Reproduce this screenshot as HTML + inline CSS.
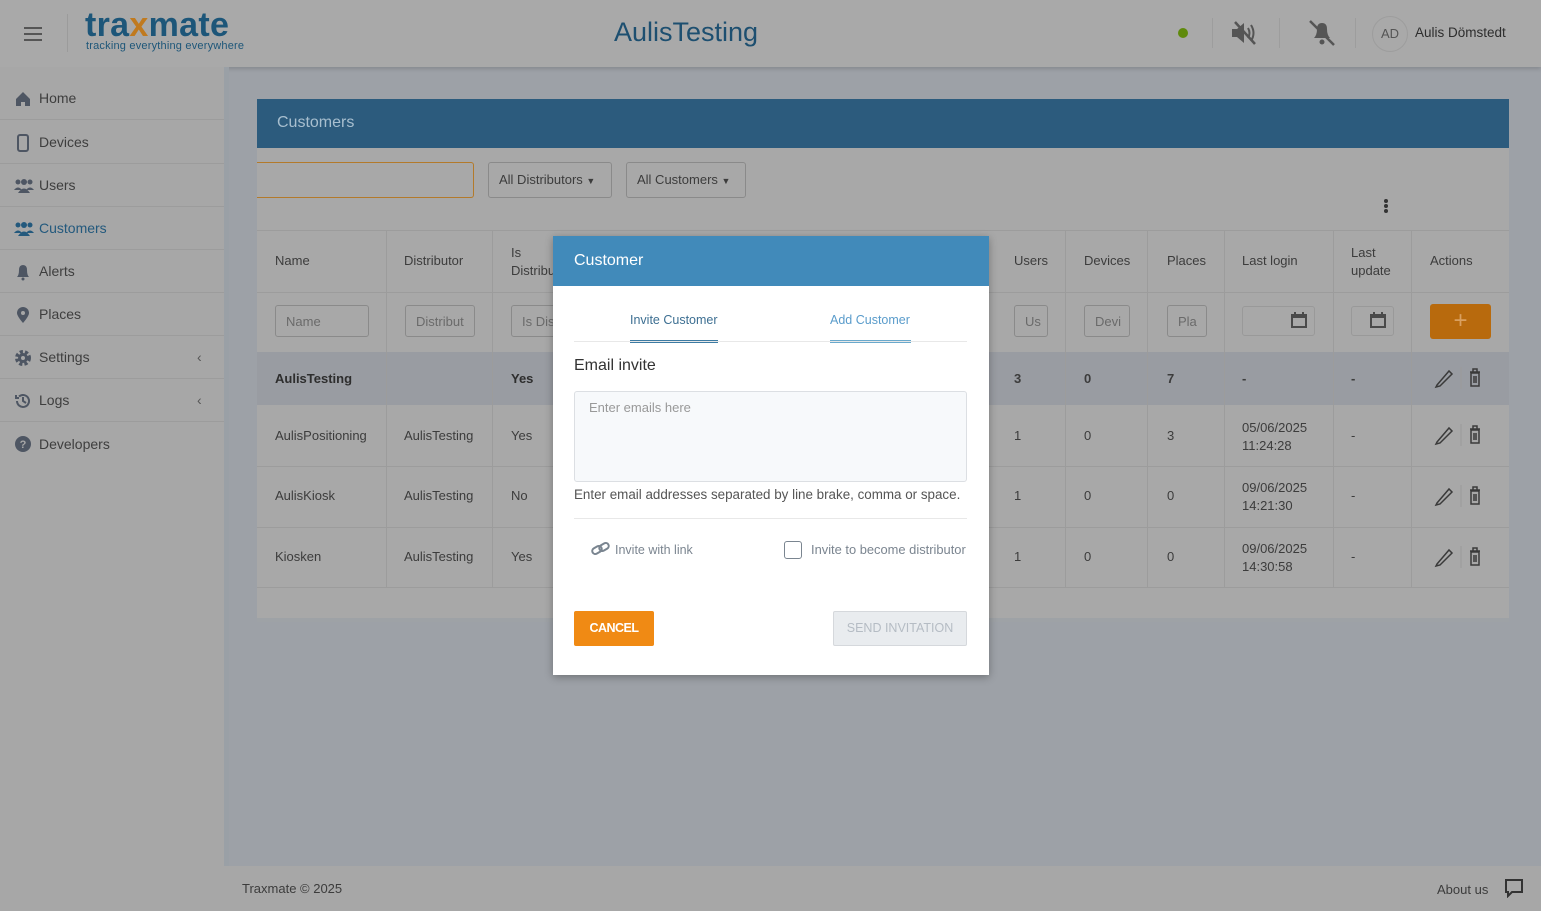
<!DOCTYPE html>
<html><head><meta charset="utf-8">
<style>
*{box-sizing:border-box;margin:0;padding:0}
body{width:1541px;height:911px;overflow:hidden;background:#9da1a7;font-family:"Liberation Sans",sans-serif;color:#3c3c3c;position:relative;font-size:13px}
.a{position:absolute}
.hdr{left:0;top:0;width:1541px;height:67px;background:#a9a9a9;box-shadow:0 2px 4px rgba(0,0,0,.15)}
.side{left:0;top:67px;width:224px;height:844px;background:#a7a7a7}
.nav{position:absolute;left:0;width:224px;height:43px;border-bottom:1px solid #9c9c9c;font-size:14px;color:#3e3e3e;display:flex;align-items:center;padding-left:39px}
.ico{position:absolute;left:14px;top:13px;width:18px;height:18px}
.card{left:257px;top:99px;width:1252px;height:522px;background:#a8a8a8}
.cell{position:absolute;font-size:13px;color:#3c3c3c}
.vl{position:absolute;width:1px;background:#9c9c9c}
.hl{position:absolute;height:1px;background:#9c9c9c;left:257px;width:1252px}
.inp{position:absolute;height:32px;border:1px solid #8a8a8a;border-radius:3px;font-size:13px;color:#6a6a6a;padding:8px 10px;white-space:nowrap;overflow:hidden}
.modal{left:553px;top:236px;width:436px;height:439px;background:#fff;box-shadow:0 2px 8px rgba(0,0,0,.3)}
</style></head><body>
<div class="a hdr">
  <div class="a" style="left:24px;top:27px;width:18px;height:2px;background:#555;box-shadow:0 6px 0 #555,0 12px 0 #555"></div>
  <div class="a" style="left:67px;top:14px;width:1px;height:38px;background:#9b9b9b"></div>
  <div class="a" style="left:85px;top:6px;font-size:34px;font-weight:bold;color:#1d5679;letter-spacing:0.3px">tra<span style="color:#c07a1f">x</span>mate</div>
  <div class="a" style="left:86px;top:40px;font-size:11px;color:#1d5679;letter-spacing:0.2px">tracking everything everywhere</div>
  <div class="a" style="left:614px;top:17px;font-size:27px;color:#1d4f70">AulisTesting</div>
  <div class="a" style="left:1178px;top:28px;width:10px;height:10px;border-radius:50%;background:#5f8a0c"></div>
  <div class="a" style="left:1212px;top:18px;width:1px;height:30px;background:#9d9d9d"></div>
  <svg class="a" style="left:1230px;top:20px" width="30" height="26" viewBox="0 0 30 26"><path d="M2 9h5l7-6v20l-7-6H2z" fill="#555"/><path d="M18 8q3 5 0 10M21 5q5 8 0 16" stroke="#555" stroke-width="2" fill="none"/><path d="M5 2l20 22" stroke="#555" stroke-width="2.5"/></svg>
  <div class="a" style="left:1279px;top:18px;width:1px;height:30px;background:#9d9d9d"></div>
  <svg class="a" style="left:1306px;top:18px" width="32" height="30" viewBox="0 0 32 30"><path d="M8 20q3-3 3-9q0-6 5-6q5 0 5 6q0 6 3 9z" fill="#555"/><circle cx="16" cy="24" r="2.5" fill="#555"/><path d="M4 3l24 24" stroke="#555" stroke-width="2.5"/></svg>
  <div class="a" style="left:1355px;top:18px;width:1px;height:30px;background:#9d9d9d"></div>
  <div class="a" style="left:1372px;top:16px;width:36px;height:36px;border-radius:50%;border:1px solid #9d9d9d;font-size:13px;color:#555;text-align:center;line-height:34px">AD</div>
  <div class="a" style="left:1415px;top:25px;font-size:13.5px;color:#2d2d2d">Aulis Dömstedt</div>
</div>
<div class="a side">
  <div class="nav" style="top:10px"><svg class="ico" viewBox="0 0 18 18"><path d="M2 9L9 2l7 7v7h-5v-4H7v4H2z" fill="#4e5663"/></svg>Home</div>
  <div class="nav" style="top:54px"><svg class="ico" viewBox="0 0 18 18"><rect x="4" y="1" width="10" height="16" rx="2" fill="none" stroke="#4e5663" stroke-width="2"/></svg>Devices</div>
  <div class="nav" style="top:97px"><svg class="ico" viewBox="0 0 22 18" style="width:22px;left:13px"><circle cx="5" cy="5" r="2.5" fill="#4e5663"/><circle cx="11" cy="5" r="3" fill="#4e5663"/><circle cx="17" cy="5" r="2.5" fill="#4e5663"/><path d="M1 13q4-5 8 0zM5 16q6-9 12 0zM13 13q4-5 8 0z" fill="#4e5663"/></svg>Users</div>
  <div class="nav" style="top:140px;color:#23597d"><svg class="ico" viewBox="0 0 22 18" style="width:22px;left:13px"><circle cx="5" cy="5" r="2.5" fill="#23597d"/><circle cx="11" cy="5" r="3" fill="#23597d"/><circle cx="17" cy="5" r="2.5" fill="#23597d"/><path d="M1 13q4-5 8 0zM5 16q6-9 12 0zM13 13q4-5 8 0z" fill="#23597d"/></svg>Customers</div>
  <div class="nav" style="top:183px"><svg class="ico" viewBox="0 0 18 18"><path d="M3 14q2-2 2-7q0-5 4-5q4 0 4 5q0 5 2 7z" fill="#4e5663"/><circle cx="9" cy="16" r="1.5" fill="#4e5663"/></svg>Alerts</div>
  <div class="nav" style="top:226px"><svg class="ico" viewBox="0 0 18 18"><path d="M9 17Q3 10 3 7a6 6 0 0 1 12 0q0 3-6 10z" fill="#4e5663"/><circle cx="9" cy="7" r="2" fill="#a7a7a7"/></svg>Places</div>
  <div class="nav" style="top:269px"><svg class="ico" viewBox="0 0 18 18"><circle cx="9" cy="9" r="6" fill="none" stroke="#4e5663" stroke-width="4" stroke-dasharray="3 2"/><circle cx="9" cy="9" r="5" fill="#4e5663"/><circle cx="9" cy="9" r="2" fill="#a7a7a7"/></svg>Settings<span class="a" style="left:197px;color:#555">‹</span></div>
  <div class="nav" style="top:312px"><svg class="ico" viewBox="0 0 18 18"><path d="M3 9a6 6 0 1 0 2-4.5M2 3v3h3M9 5v4l3 2" fill="none" stroke="#4e5663" stroke-width="2"/></svg>Logs<span class="a" style="left:197px;color:#555">‹</span></div>
  <div class="nav" style="top:355px;border:none"><svg class="ico" viewBox="0 0 18 18"><circle cx="9" cy="9" r="8" fill="#4e5663"/><text x="9" y="13" font-size="11" text-anchor="middle" fill="#a7a7a7" font-weight="bold" font-family="Liberation Sans">?</text></svg>Developers</div>
</div>
<div class="a" style="left:224px;top:67px;width:5px;height:844px;background:#9aa0a6"></div>
<div class="a card"></div>
<div class="a" style="left:257px;top:99px;width:1252px;height:49px;background:#2c5b7d;color:#a8bfcf;font-size:16px;padding:15px 20px">Customers</div>
<div class="a" style="left:257px;top:162px;width:217px;height:36px;border:1px solid #b37a2b;border-left:none;border-radius:0 3px 3px 0"></div>
<div class="inp" style="left:488px;top:162px;width:124px;height:36px;padding:9px 10px;color:#3c3c3c">All Distributors <span style="font-size:9px">▼</span></div>
<div class="inp" style="left:626px;top:162px;width:120px;height:36px;padding:9px 10px;color:#3c3c3c">All Customers <span style="font-size:9px">▼</span></div>
<div class="a" style="left:1384px;top:199px;width:4px;height:4px;border-radius:50%;background:#333;box-shadow:0 5px 0 #333,0 10px 0 #333"></div>
<div class="hl" style="top:230px"></div>
<div class="hl" style="top:292px"></div>
<div class="a" style="left:257px;top:352px;width:1252px;height:53px;background:#999ca2"></div>
<div class="hl" style="top:466px"></div>
<div class="hl" style="top:527px"></div>
<div class="hl" style="top:587px"></div>
<div class="a" style="left:257px;top:618px;width:1252px;height:4px;background:#9ea2a6"></div>
<div class="vl" style="left:386px;top:231px;height:356px"></div>
<div class="vl" style="left:492px;top:231px;height:356px"></div>
<div class="vl" style="left:1065px;top:231px;height:356px"></div>
<div class="vl" style="left:1147px;top:231px;height:356px"></div>
<div class="vl" style="left:1224px;top:231px;height:356px"></div>
<div class="vl" style="left:1333px;top:231px;height:356px"></div>
<div class="vl" style="left:1411px;top:231px;height:356px"></div>
<div class="cell" style="left:275px;top:253px">Name</div>
<div class="cell" style="left:404px;top:253px">Distributor</div>
<div class="cell" style="left:511px;top:244px;line-height:18px">Is<br>Distribu</div>
<div class="cell" style="left:1014px;top:253px">Users</div>
<div class="cell" style="left:1084px;top:253px">Devices</div>
<div class="cell" style="left:1167px;top:253px">Places</div>
<div class="cell" style="left:1242px;top:253px">Last login</div>
<div class="cell" style="left:1351px;top:244px;line-height:18px">Last<br>update</div>
<div class="cell" style="left:1430px;top:253px">Actions</div>
<div class="inp" style="left:275px;top:305px;width:94px">Name</div>
<div class="inp" style="left:405px;top:305px;width:70px">Distribut</div>
<div class="inp" style="left:511px;top:305px;width:50px">Is Dis</div>
<div class="inp" style="left:1014px;top:305px;width:34px">Us</div>
<div class="inp" style="left:1084px;top:305px;width:46px">Devi</div>
<div class="inp" style="left:1167px;top:305px;width:40px">Pla</div>
<div class="inp" style="left:1242px;top:306px;width:73px;height:30px;border-color:#999"></div>
<div class="inp" style="left:1351px;top:306px;width:43px;height:30px;border-color:#999"></div>
<svg class="a" style="left:1290px;top:311px" width="18" height="18" viewBox="0 0 18 18"><rect x="2" y="4" width="14" height="12" fill="none" stroke="#4a4a4a" stroke-width="2"/><rect x="2" y="4" width="14" height="3" fill="#4a4a4a"/><path d="M5 1v4M13 1v4" stroke="#4a4a4a" stroke-width="2"/></svg>
<svg class="a" style="left:1369px;top:311px" width="18" height="18" viewBox="0 0 18 18"><rect x="2" y="4" width="14" height="12" fill="none" stroke="#4a4a4a" stroke-width="2"/><rect x="2" y="4" width="14" height="3" fill="#4a4a4a"/><path d="M5 1v4M13 1v4" stroke="#4a4a4a" stroke-width="2"/></svg>
<div class="a" style="left:1430px;top:304px;width:61px;height:35px;background:#b86a0d;border-radius:3px;color:#d9a060;font-size:24px;text-align:center;line-height:33px;font-weight:300">+</div>
<div class="cell" style="left:275px;top:371px;font-weight:bold;color:#2e2e2e">AulisTesting</div>
<div class="cell" style="left:511px;top:371px;font-weight:bold;color:#2e2e2e">Yes</div>
<div class="cell" style="left:1014px;top:371px;font-weight:bold">3</div>
<div class="cell" style="left:1084px;top:371px;font-weight:bold">0</div>
<div class="cell" style="left:1167px;top:371px;font-weight:bold">7</div>
<div class="cell" style="left:1242px;top:371px;font-weight:bold">-</div>
<div class="cell" style="left:1351px;top:371px;font-weight:bold">-</div>
<div class="cell" style="left:275px;top:428px">AulisPositioning</div><div class="cell" style="left:404px;top:428px">AulisTesting</div><div class="cell" style="left:511px;top:428px">Yes</div><div class="cell" style="left:1014px;top:428px">1</div><div class="cell" style="left:1084px;top:428px">0</div><div class="cell" style="left:1167px;top:428px">3</div><div class="cell" style="left:1242px;top:419px;line-height:18px">05/06/2025<br>11:24:28</div><div class="cell" style="left:1351px;top:428px">-</div>
<div class="cell" style="left:275px;top:488px">AulisKiosk</div><div class="cell" style="left:404px;top:488px">AulisTesting</div><div class="cell" style="left:511px;top:488px">No</div><div class="cell" style="left:1014px;top:488px">1</div><div class="cell" style="left:1084px;top:488px">0</div><div class="cell" style="left:1167px;top:488px">0</div><div class="cell" style="left:1242px;top:479px;line-height:18px">09/06/2025<br>14:21:30</div><div class="cell" style="left:1351px;top:488px">-</div>
<div class="cell" style="left:275px;top:549px">Kiosken</div><div class="cell" style="left:404px;top:549px">AulisTesting</div><div class="cell" style="left:511px;top:549px">Yes</div><div class="cell" style="left:1014px;top:549px">1</div><div class="cell" style="left:1084px;top:549px">0</div><div class="cell" style="left:1167px;top:549px">0</div><div class="cell" style="left:1242px;top:540px;line-height:18px">09/06/2025<br>14:30:58</div><div class="cell" style="left:1351px;top:549px">-</div>
<svg class="a" style="left:1434px;top:367px" width="54" height="220" viewBox="0 0 54 220">
<g id="r" fill="none" stroke="#3a3a3a" stroke-width="1.5"><path d="M3 18L15 4l3 3L6 19l-4 1z"/><path d="M36 5h10M39 5V2h4v3M37 6h8v13h-8zM40 9v7M42 9v7"/><path d="M27 0v22" stroke="#9a9a9a" stroke-width="1"/></g>
<use href="#r" y="57"/><use href="#r" y="118"/><use href="#r" y="179"/>
</svg>
<div class="a" style="left:224px;top:866px;width:1317px;height:45px;background:#a7a7a7"></div>
<div class="a" style="left:242px;top:881px;font-size:13px;color:#3c3c3c">Traxmate © 2025</div>
<div class="a" style="left:1437px;top:882px;font-size:13px;color:#3c3c3c">About us</div>
<svg class="a" style="left:1504px;top:878px" width="20" height="20" viewBox="0 0 20 20"><path d="M2 2h16v12H8l-4 4v-4H2z" fill="none" stroke="#333" stroke-width="2"/></svg>

<div class="a modal">
  <div class="a" style="left:0;top:0;width:436px;height:50px;background:#418aba;color:#fff;font-size:16px;padding:16px 21px">Customer</div>
  <div class="a" style="left:77px;top:77px;font-size:12.5px;color:#3d6f92">Invite Customer</div>
  <div class="a" style="left:77px;top:104px;width:88px;height:3px;background:#3d7ba3"></div>
  <div class="a" style="left:277px;top:77px;font-size:12.5px;color:#5a9ccb">Add Customer</div>
  <div class="a" style="left:277px;top:104px;width:81px;height:3px;background:#6aa9cc"></div>
  <div class="a" style="left:21px;top:105px;width:393px;height:1px;background:#e8e8e8"></div>
  <div class="a" style="left:21px;top:121px;font-size:16px;color:#333">Email invite</div>
  <div class="a" style="left:21px;top:155px;width:393px;height:91px;border:1px solid #dcdfe3;border-radius:3px;background:#f7f9fb;padding:8px 14px;font-size:13px;color:#999">Enter emails here</div>
  <div class="a" style="left:21px;top:251px;font-size:13.4px;color:#555;white-space:nowrap">Enter email addresses separated by line brake, comma or space.</div>
  <div class="a" style="left:21px;top:282px;width:393px;height:1px;background:#e8e8e8"></div>
  <svg class="a" style="left:38px;top:305px" width="20" height="16" viewBox="0 0 20 16"><g fill="none" stroke="#7a8590" stroke-width="2"><rect x="1" y="6" width="10" height="6" rx="3" transform="rotate(-30 6 9)"/><rect x="8" y="3" width="10" height="6" rx="3" transform="rotate(-30 13 6)"/></g></svg>
  <div class="a" style="left:62px;top:307px;font-size:12.5px;color:#7b8590">Invite with link</div>
  <div class="a" style="left:231px;top:305px;width:18px;height:18px;border:1px solid #7a8590;border-radius:3px"></div>
  <div class="a" style="left:258px;top:306px;font-size:12.9px;color:#7b8590;white-space:nowrap">Invite to become distributor</div>
  <div class="a" style="left:21px;top:375px;width:80px;height:35px;background:#f08a14;border-radius:2px;color:#fff;font-size:12.5px;font-weight:bold;text-align:center;line-height:35px;letter-spacing:-0.5px">CANCEL</div>
  <div class="a" style="left:280px;top:375px;width:134px;height:35px;background:#e9ecef;border:1px solid #d5d8dc;border-radius:2px;color:#b5bcc4;font-size:12.5px;text-align:center;line-height:33px">SEND INVITATION</div>
</div>
</body></html>
